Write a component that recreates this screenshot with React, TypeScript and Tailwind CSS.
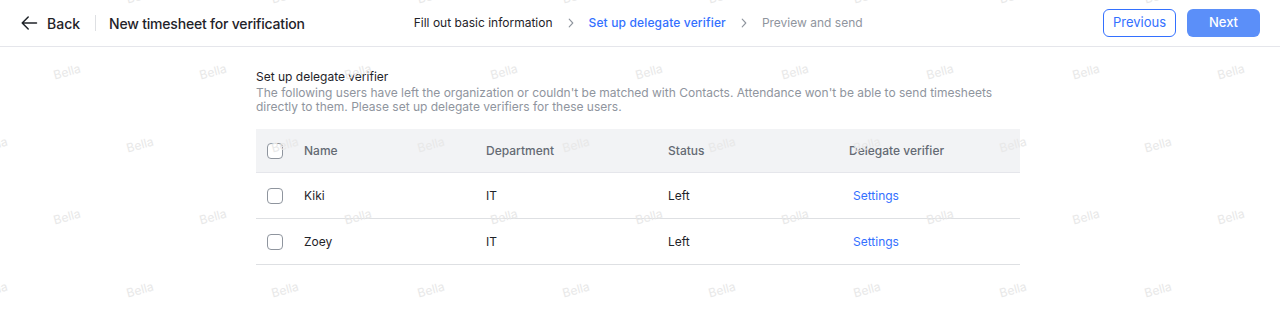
import React from "react";

const marks: { x: number; y: number }[] = [];
[-4, 72, 145, 217, 290].forEach((y, r) => {
  const start = r % 2 === 1 ? 67 : -6;
  for (let k = 0; k < 10; k++) marks.push({ x: start + k * 145.5, y });
});

function Checkbox() {
  return <div className="w-4 h-4 rounded-[4px] border border-[#8f959e] bg-white" />;
}

function Chevron() {
  return (
    <svg width="12" height="12" viewBox="0 0 12 12" fill="none" className="text-[#8f959e]">
      <path d="M4.2 2.2 7.8 6 4.2 9.8" stroke="currentColor" strokeWidth="1.1" strokeLinecap="round" strokeLinejoin="round" />
    </svg>
  );
}

const rows = [
  { name: "Kiki", dept: "IT", status: "Left" },
  { name: "Zoey", dept: "IT", status: "Left" },
];

export default function App() {
  return (
    <div className="relative w-[1280px] h-[330px] bg-white overflow-hidden text-[#1f2329]" style={{ fontFamily: "Inter, 'Noto Sans', sans-serif" }}>
      <header className="h-[47px] border-b border-[#e5e6eb] flex items-center px-5">
        <div className="flex items-center gap-[9px]">
          <svg width="18" height="18" viewBox="0 0 18 18" fill="none">
            <path d="M16.5 9H2.2M8.2 3 2.2 9l6 6" stroke="#1f2329" strokeWidth="1.5" strokeLinecap="round" strokeLinejoin="round" />
          </svg>
          <span className="text-[14px] font-medium">Back</span>
        </div>
        <div className="w-px h-[16px] bg-[#dee0e3] ml-[15px] mr-[13px]" />
        <span className="text-[14px] font-medium tracking-[-0.2px]">New timesheet for verification</span>
        <div className="flex items-center ml-[109px] text-[12px]">
          <span>Fill out basic information</span>
          <span className="mx-[12px]"><Chevron /></span>
          <span className="text-[#3370ff] font-medium tracking-[0.15px]">Set up delegate verifier</span>
          <span className="mx-[12px]"><Chevron /></span>
          <span className="text-[#8f959e]">Preview and send</span>
        </div>
        <div className="ml-auto flex items-center gap-[11px]">
          <button className="w-[73px] h-[28px] rounded-[6px] border border-[#3370ff] text-[#3370ff] text-[13px] bg-white">Previous</button>
          <button className="w-[73px] h-[28px] rounded-[6px] bg-[#5b8ff9] text-white text-[13px] font-medium">Next</button>
        </div>
      </header>

      <main className="w-[764px] ml-[256px] pt-[22px]">
        <div className="text-[12px] leading-[16px]">Set up delegate verifier</div>
        <p className="text-[12px] leading-[14px] text-[#8f959e] mt-[1px]">
          The following users have left the organization or couldn't be matched with Contacts. Attendance won't be able to send timesheets directly to them. Please set up delegate verifiers for these users.
        </p>
        <div className="mt-[15px] text-[12px]">
          <div className="grid grid-cols-[48px_182px_182px_181px_1fr] items-center h-[44px] bg-[#f2f3f5] border-b border-[#e5e6eb] text-[#646a73] font-medium">
            <div className="pl-[11px]"><Checkbox /></div>
            <div>Name</div>
            <div>Department</div>
            <div>Status</div>
            <div>Delegate verifier</div>
          </div>
          {rows.map((r) => (
            <div key={r.name} className="grid grid-cols-[48px_182px_182px_181px_1fr] items-center h-[46px] border-b border-[#dee0e3]">
              <div className="pl-[11px]"><Checkbox /></div>
              <div>{r.name}</div>
              <div>{r.dept}</div>
              <div>{r.status}</div>
              <div className="pl-[4px] text-[#3370ff]">Settings</div>
            </div>
          ))}
        </div>
      </main>

      <div className="absolute inset-0 pointer-events-none">
        {marks.map((m, i) => (
          <span
            key={i}
            className="absolute text-[12px] text-[#e8e8e8] -rotate-[15deg] -translate-x-1/2 -translate-y-1/2"
            style={{ left: m.x, top: m.y }}
          >
            Bella
          </span>
        ))}
      </div>
    </div>
  );
}
